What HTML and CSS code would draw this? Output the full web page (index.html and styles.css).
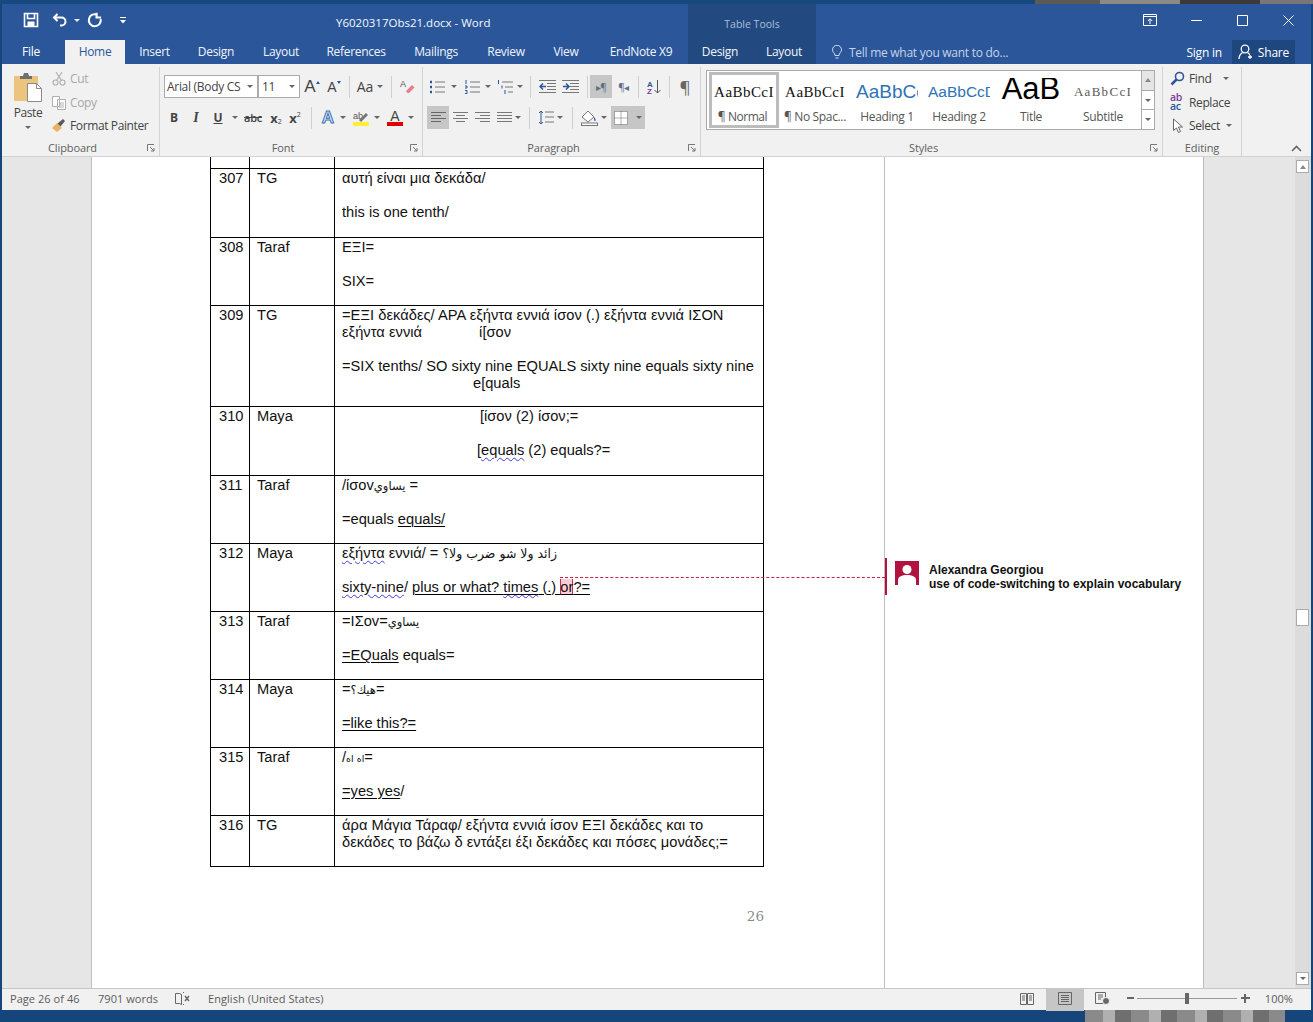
FILE: index.html
```html
<!DOCTYPE html>
<html lang="en">
<head>
<meta charset="utf-8">
<title>Y6020317Obs21.docx - Word</title>
<link rel="stylesheet" href="styles.css">
</head>
<body>
<div class="desk-top"></div>
<div class="window">
  <header class="titlebar">
    <div class="qat">
      <span class="c w34"><svg width="16" height="16" viewBox="0 0 16 16" fill="none" stroke="#fff" stroke-width="1.6"><path d="M1.5 1.5h13v13h-13z"/><path d="M4.5 1.5v5h7v-5"/><path d="M4.5 14.5v-5h7v5" fill="#fff" stroke="none"/></svg></span>
      <span class="c w24"><svg width="16" height="16" viewBox="0 0 16 16" fill="none" stroke="#fff" stroke-width="2"><path d="M5.5 2 2 5.5 5.5 9"/><path d="M2.5 5.5h7a4 4 0 0 1 0 8H8"/></svg></span>
      <span class="c w10"><i class="caret caret-w"></i></span>
      <span class="c w26"><svg width="16" height="16" viewBox="0 0 16 16" fill="none" stroke="#fff" stroke-width="2"><path d="M10.5 2.8A6 6 0 1 0 13.7 7"/><path d="M9.5 0.8v4.8h4.6"/></svg></span>
      <span class="c w30"><svg width="8" height="8" viewBox="0 0 8 8" fill="#fff"><path d="M1 1h6v1H1zM1 4h6L4 7.500z"/></svg></span>
    </div>
    <div class="doc-title">Y6020317Obs21.docx - Word</div>
    <div class="tools-title">Table Tools</div>
    <div class="winctl">
      <span class="c w46"><svg width="14" height="12" viewBox="0 0 14 12" fill="none" stroke="#fff"><path d="M.5.5h13v11H.5zM.5 2.500h13"/><path d="M7 10V5M4.800 7 7 4.800 9.200 7"/></svg></span>
      <span class="c w46"><svg width="11" height="11" viewBox="0 0 11 11" stroke="#fff"><path d="M0 5.500h11"/></svg></span>
      <span class="c w46"><svg width="11" height="11" viewBox="0 0 11 11" fill="none" stroke="#fff"><path d="M.5.500h10v10H.5z"/></svg></span>
      <span class="c w46"><svg width="11" height="11" viewBox="0 0 11 11" stroke="#fff"><path d="M.5.500l10 10M10.500.500l-10 10"/></svg></span>
    </div>
  </header>

  <nav class="tabs">
    <span class="tab t-file">File</span>
    <span class="tab t-home">Home</span>
    <span class="tab t60">Insert</span>
    <span class="tab t64">Design</span>
    <span class="tab t66">Layout</span>
    <span class="tab t84">References</span>
    <span class="tab t76">Mailings</span>
    <span class="tab t64">Review</span>
    <span class="tab t56">View</span>
    <span class="tab t94">EndNote X9</span>
    <span class="tab t64 ctx">Design</span>
    <span class="tab t64 ctx">Layout</span>
    <span class="tell"><svg width="12" height="15" viewBox="0 0 12 15" fill="none" stroke="#cfdcf0"><path d="M4 10.500C4 8 1.500 7.500 1.500 4.800a4.500 4.500 0 0 1 9 0C10.500 7.500 8 8 8 10.500zM4.500 13h3"/></svg>Tell me what you want to do...</span>
    <span class="signin">Sign in</span>
    <span class="share"><svg width="17" height="16" viewBox="0 0 17 16" fill="none" stroke="#fff" stroke-width="1.300"><circle cx="7" cy="5" r="3.800"/><path d="M1 15c0-3.500 2-5.500 3.500-6.500M9.500 8.500c1 .6 1.700 1.300 2.200 2.200M12 11v4M10 13h4"/></svg>Share</span>
  </nav>

  <section class="ribbon">
    <div class="grp g-clip">
      <div class="body clip-body">
        <div class="paste">
          <svg width="30" height="31" viewBox="0 0 30 31"><rect x="1" y="5" width="24" height="25" fill="#edc47e"/><path d="M7 5h3l1-3h4l1 3h3v3H7z" fill="#6f6f6f"/><path d="M14.500 12.500h9l5 5v13h-14z" fill="#fff" stroke="#8a8a8a"/><path d="M23.500 12.500v5h5" fill="none" stroke="#8a8a8a"/></svg>
          <span class="paste-l">Paste</span>
          <i class="caret"></i>
        </div>
        <div class="clip-list">
          <span class="cmd off"><svg width="14" height="15" viewBox="0 0 14 15" fill="none" stroke="#b0b0b0" stroke-width="1.200"><circle cx="3.500" cy="11.500" r="2.500"/><circle cx="10.500" cy="11.500" r="2.500"/><path d="M4.500 9.500 10 1M9.500 9.500 4 1"/></svg>Cut</span>
          <span class="cmd off"><svg width="14" height="15" viewBox="0 0 14 15" fill="#fff" stroke="#b0b0b0"><path d="M.5 1.500h7v10h-7zM5.500 4.500h8v10h-8z"/><path d="M7 8h5M7 10h5M7 12h5" fill="none"/></svg>Copy</span>
          <span class="cmd"><svg width="14" height="15" viewBox="0 0 14 15"><path d="M0 10 5 5l5 5-5 4z" fill="#e8b35c"/><path d="M5.500 5.500 11 1l2 2-4.500 5.500z" fill="#5a5a5a"/></svg>Format Painter</span>
        </div>
      </div>
      <div class="glabel"><span>Clipboard</span><svg class="launch" width="8" height="8" viewBox="0 0 8 8" fill="none" stroke="#777"><path d="M.5 7V.5H7M3 3l4 4M7 4v3H4"/></svg></div>
    </div>

    <div class="grp g-font">
      <div class="body rows">
        <div class="row row-font1">
          <span class="sel sel-font">Arial (Body CS<i class="caret"></i></span>
          <span class="sel sel-size">11<i class="caret"></i></span>
          <span class="c w24 glyph big">A<i class="mini-up"></i></span>
          <span class="c w20 glyph mid">A<i class="mini-dn"></i></span>
          <span class="sep sw10"></span>
          <span class="c w22 glyph aa">Aa</span>
          <span class="c w8"><i class="caret"></i></span>
          <span class="sep sw14"></span>
          <span class="c w18"><svg width="16" height="16" viewBox="0 0 16 16"><path d="M7 12 13 6l2.500 2.500L10 14H8.500z" fill="#e4808e"/><text x="1" y="8" class="tiny">A</text></svg></span>
        </div>
        <div class="row">
          <span class="c w22 fmt b">B</span>
          <span class="c w22 fmt i">I</span>
          <span class="c w22 fmt u">U</span>
          <span class="c w12"><i class="caret"></i></span>
          <span class="c w24 abc">abc</span>
          <span class="c w22 fmt b small">x<sub>2</sub></span>
          <span class="c w16 fmt b small">x<sup>2</sup></span>
          <span class="sep sw16"></span>
          <span class="c w18 glowA">A</span>
          <span class="c w12"><i class="caret"></i></span>
          <span class="c w24"><svg width="18" height="16" viewBox="0 0 18 16"><rect x="1" y="12" width="16" height="4" fill="#ffee33"/><text x="1" y="9" class="tiny">ab</text><path d="M7 10 14 3l2 2-7 7z" fill="#777"/></svg></span>
          <span class="c w8"><i class="caret"></i></span>
          <span class="c colorA">A</span>
          <span class="c w4"><i class="caret"></i></span>
        </div>
      </div>
      <div class="glabel"><span>Font</span><svg class="launch" width="8" height="8" viewBox="0 0 8 8" fill="none" stroke="#777"><path d="M.5 7V.5H7M3 3l4 4M7 4v3H4"/></svg></div>
    </div>

    <div class="grp g-para">
      <div class="body rows">
        <div class="row">
          <span class="c w22"><svg width="16" height="14" viewBox="0 0 16 14" fill="none" stroke="#777"><path d="M6 2h10M6 7h10M6 12h10"/><path d="M1 2h2M1 7h2M1 12h2" stroke="#2b579a" stroke-width="2.500"/></svg></span>
          <span class="c w12"><i class="caret"></i></span>
          <span class="c w24"><svg width="16" height="14" viewBox="0 0 16 14" fill="none" stroke="#777"><path d="M6 2h10M6 7h10M6 12h10"/><path d="M2 0v4M1 6h2v2H1M1 10.500h2v3H1" stroke="#2b579a"/></svg></span>
          <span class="c w8"><i class="caret"></i></span>
          <span class="c w26"><svg width="16" height="14" viewBox="0 0 16 14" fill="none" stroke="#777"><path d="M5 2h11M8 7h8M11 12h5"/><path d="M1.500 0v4M5 5.500v3M8 10v4" stroke="#2b579a"/></svg></span>
          <span class="c w4"><i class="caret"></i></span>
          <span class="sep sw16"></span>
          <span class="c w18"><svg width="17" height="13" viewBox="0 0 17 13" fill="none" stroke="#777"><path d="M0 .5h17M8 3.500h9M8 6.500h9M8 9.500h9M0 12.500h17"/><path d="M7 6.500H1M4 3.500l-3 3 3 3" stroke="#2b579a" stroke-width="1.500"/></svg></span>
          <span class="c w28"><svg width="17" height="13" viewBox="0 0 17 13" fill="none" stroke="#777"><path d="M0 .5h17M8 3.500h9M8 6.500h9M8 9.500h9M0 12.500h17"/><path d="M1 6.500h6M4 3.500l3 3-3 3" stroke="#2b579a" stroke-width="1.500"/></svg></span>
          <span class="sep sw6"></span>
          <span class="c w22 h23 on pil">&#9656;&#182;</span>
          <span class="c w22 pil">&#182;&#9666;</span>
          <span class="sep sw8"></span>
          <span class="c w24"><svg width="16" height="16" viewBox="0 0 16 16" fill="none" stroke="#555"><text x="1" y="7.500" class="az az-a">A</text><text x="1" y="15" class="az az-z">Z</text><path d="M11.500 1v13M8.500 11l3 3 3-3"/></svg></span>
          <span class="sep sw6"></span>
          <span class="c w26 pilcrow">&#182;</span>
        </div>
        <div class="row row-para2">
          <span class="c w22 h23 on"><svg width="15" height="11" viewBox="0 0 15 11" stroke="#666"><path d="M0 .5h15M0 3.500h10M0 6.500h15M0 9.500h10"/></svg></span>
          <span class="c w22"><svg width="15" height="11" viewBox="0 0 15 11" stroke="#777"><path d="M0 .5h15M3 3.500h9M0 6.500h15M3 9.500h9"/></svg></span>
          <span class="c w22"><svg width="15" height="11" viewBox="0 0 15 11" stroke="#777"><path d="M0 .5h15M5 3.500h10M0 6.500h15M5 9.500h10"/></svg></span>
          <span class="c w22"><svg width="15" height="11" viewBox="0 0 15 11" stroke="#777"><path d="M0 .5h15M0 3.500h15M0 6.500h15M0 9.500h15"/></svg></span>
          <span class="c w6"><i class="caret"></i></span>
          <span class="sep sw16"></span>
          <span class="c w18"><svg width="16" height="15" viewBox="0 0 16 15" fill="none" stroke="#777"><path d="M7 2h9M7 7h9M7 12h9"/><path d="M3 1v13M1 3l2-2 2 2M1 12l2 2 2-2" stroke="#2b579a"/></svg></span>
          <span class="c w10"><i class="caret"></i></span>
          <span class="sep sw14"></span>
          <span class="c w22"><svg width="18" height="17" viewBox="0 0 18 17"><path d="M1 8 7 2l6 6-6 5z" fill="#fff" stroke="#777"/><path d="M13 8c2 2 2 4 1 4s-1-2-1-4z" fill="#2b579a"/><rect x=".5" y="14" width="16" height="2.500" fill="#fff" stroke="#777"/></svg></span>
          <span class="c w6"><i class="caret"></i></span>
          <span class="borders on h23"><svg width="14" height="14" viewBox="0 0 14 14" fill="#fff" stroke="#666" stroke-dasharray="1 1"><path d="M.5.5h13v13H.5zM7 .5v13M.5 7h13"/></svg><i class="caret"></i></span>
        </div>
      </div>
      <div class="glabel"><span>Paragraph</span><svg class="launch" width="8" height="8" viewBox="0 0 8 8" fill="none" stroke="#777"><path d="M.5 7V.5H7M3 3l4 4M7 4v3H4"/></svg></div>
    </div>

    <div class="grp g-styles">
      <div class="body gallery-wrap">
        <div class="gallery">
          <div class="sty sty-sel"><span class="pv pv-n">AaBbCcI</span><span class="sl sl-n">&#182; Normal</span></div>
          <div class="sty"><span class="pv pv-n">AaBbCcI</span><span class="sl">&#182; No Spac...</span></div>
          <div class="sty"><span class="pv pv-h1">AaBbCcD</span><span class="sl">Heading 1</span></div>
          <div class="sty"><span class="pv pv-h2">AaBbCcD</span><span class="sl">Heading 2</span></div>
          <div class="sty"><span class="pv pv-t">AaB</span><span class="sl">Title</span></div>
          <div class="sty"><span class="pv pv-s">AaBbCcI</span><span class="sl">Subtitle</span></div>
        </div>
        <div class="gscroll">
          <span class="gs gs-up"><i class="caret up"></i></span>
          <span class="gs"><i class="caret"></i></span>
          <span class="gs gs-more"><i class="caret"></i></span>
        </div>
      </div>
      <div class="glabel"><span>Styles</span><svg class="launch" width="8" height="8" viewBox="0 0 8 8" fill="none" stroke="#777"><path d="M.5 7V.5H7M3 3l4 4M7 4v3H4"/></svg></div>
    </div>

    <div class="grp g-edit">
      <div class="body clip-list edit-list">
        <span class="cmd"><svg width="15" height="15" viewBox="0 0 15 15" fill="none"><circle cx="9.500" cy="5.500" r="4" stroke="#2b579a" stroke-width="1.600"/><path d="M6.500 8.500 1.500 13.500" stroke="#2b579a" stroke-width="2.500"/></svg>Find<i class="caret cm"></i></span>
        <span class="cmd"><span class="abac"><b class="ab">ab</b><b class="ac">ac</b></span>Replace</span>
        <span class="cmd"><svg width="15" height="16" viewBox="0 0 15 16" fill="#fff" stroke="#666"><path d="M3.500 1v11.500l3-2.500 2 4.500 2-1-2-4.500h4z"/></svg>Select<i class="caret cs"></i></span>
      </div>
      <div class="glabel"><span>Editing</span></div>
    </div>

    <div class="collapse"><svg width="11" height="7" viewBox="0 0 11 7" fill="none" stroke="#666" stroke-width="1.600"><path d="M1 6l4.500-4.500L10 6"/></svg></div>
  </section>

  <main class="doc">
    <div class="gutter"></div>
    <div class="page">
      <table class="tr">
        <colgroup><col class="c1"><col class="c2"><col class="c3"></colgroup>
        <tr class="r0"><td></td><td></td><td></td></tr>
        <tr class="r69"><td>307</td><td>TG</td><td><p class="gr">αυτή είναι μια δεκάδα/</p><p>&nbsp;</p><p>this is one tenth/</p></td></tr>
        <tr class="r68"><td>308</td><td>Taraf</td><td><p class="gr">ΕΞΙ=</p><p>&nbsp;</p><p>SIX=</p></td></tr>
        <tr class="r101"><td>309</td><td>TG</td><td><p class="gr">=ΕΞΙ δεκάδες/ ΑΡΑ εξήντα εννιά ίσον (.) εξήντα εννιά ΙΣΟΝ</p><p class="gr">εξήντα εννιά<span class="gap57"></span>ί[σον</p><p>&nbsp;</p><p>=SIX tenths/ SO sixty nine EQUALS sixty nine equals sixty nine</p><p class="in131">e[quals</p></td></tr>
        <tr class="r69"><td>310</td><td>Maya</td><td><p class="in138">[ίσον (2) ίσον;=</p><p>&nbsp;</p><p class="in135">[<span class="wavy">equals</span> (2) equals?=</p></td></tr>
        <tr class="r68"><td>311</td><td>Taraf</td><td><p>/ίσοv<bdi class="ar" dir="rtl">يساوي</bdi> =</p><p>&nbsp;</p><p>=equals <u>equals/</u></p></td></tr>
        <tr class="r68"><td>312</td><td>Maya</td><td><p><span class="wavy">εξήντα</span> εννιά/ = <bdi class="ar ar-w" dir="rtl">زائد ولا شو ضرب ولا؟</bdi></p><p>&nbsp;</p><p><span class="wavy">sixty-nine</span>/ <u>plus or what? <span class="wavy">times</span> (.) <span class="hl">or</span>?=</u></p></td></tr>
        <tr class="r68"><td>313</td><td>Taraf</td><td><p>=IΣov=<bdi class="ar" dir="rtl">يساوي</bdi></p><p>&nbsp;</p><p><u>=EQuals</u> equals=</p></td></tr>
        <tr class="r68"><td>314</td><td>Maya</td><td><p>=<bdi class="ar" dir="rtl">هيك؟</bdi>=</p><p>&nbsp;</p><p><u>=like this?=</u></p></td></tr>
        <tr class="r68"><td>315</td><td>Taraf</td><td><p>/<bdi class="ar ar-n" dir="rtl">اه اه</bdi>=</p><p>&nbsp;</p><p><u>=yes yes</u>/</p></td></tr>
        <tr class="r51"><td>316</td><td>TG</td><td><p class="gr">άρα Μάγια Τάραφ/ εξήντα εννιά ίσον ΕΞΙ δεκάδες και το</p><p class="gr">δεκάδες το βάζω δ εντάξει έξι δεκάδες και πόσες μονάδες;=</p></td></tr>
      </table>
      <div class="pageno">26</div>
    </div>
    <aside class="markup">
      <div class="balloon">
        <svg class="avatar" width="24" height="24" viewBox="0 0 24 24"><rect width="24" height="24" fill="#b3123f"/><circle cx="12" cy="8.500" r="4.500" fill="#fff"/><path d="M3 24v-5c0-3.500 4-5 9-5s9 1.500 9 5v5z" fill="#fff"/></svg>
        <div class="ctext"><div>Alexandra Georgiou</div><div>use of code-switching to explain vocabulary</div></div>
      </div>
    </aside>
    <div class="gutter-r"></div>
    <div class="vscroll">
      <span class="vbtn"><i class="caret up"></i></span>
      <span class="thumb"></span>
      <span class="vbtn"><i class="caret"></i></span>
    </div>
    <div class="connector"></div>
  </main>

  <footer class="status">
    <span class="st st-page">Page 26 of 46</span>
    <span class="st st-words">7901 words</span>
    <span class="st st-book"><svg width="15" height="13" viewBox="0 0 15 13" fill="none" stroke="#666"><path d="M.5 1.500h4l2 1v10l-2-1h-4z"/><path d="M6.500 2.500v10M9 .5H8M9 12.500H8"/><path d="M10 4l4 5M14 4l-4 5" stroke-width="1.400"/></svg></span>
    <span class="st st-lang">English (United States)</span>
    <span class="st-right">
      <span class="c w38 h22"><svg width="14" height="13" viewBox="0 0 14 13" fill="none" stroke="#666"><path d="M.5 1.500h6v11h-6zM7.500 1.500h6v11h-6zM2 4h3M2 6h3M2 8h3M9 4h3M9 6h3M9 8h3"/></svg></span>
      <span class="c w38 h22 on-st"><svg width="14" height="13" viewBox="0 0 14 13" fill="none" stroke="#666"><path d="M.5.5h13v12H.5zM3 3.500h8M3 5.500h8M3 7.500h8M3 9.500h8"/></svg></span>
      <span class="c w38 h22"><svg width="15" height="13" viewBox="0 0 15 13" fill="none" stroke="#666"><path d="M.5.5h10v11H.5zM3 3h5M3 5h5M3 7h3"/><circle cx="11" cy="9" r="3.500" fill="#666" stroke="#f1f1f1"/></svg></span>
      <span class="zoom-m"></span>
      <span class="slider"><i class="knob"></i></span>
      <span class="zoom-p"></span>
      <span class="st st-pct">100%</span>
    </span>
  </footer>
</div>
<div class="desk-bottom"><div class="photo"></div></div>
</body>
</html>
```
FILE: styles.css
```css
* { box-sizing: border-box; }
html, body { margin: 0; padding: 0; }
body { width: 1313px; height: 1022px; overflow: hidden; background: #15457a; font-family: "Open Sans", "Noto Sans", sans-serif; font-size: 12px; color: #444; }
i { font-style: normal; }
p { margin: 0; }

.desk-top { height: 4px; background: linear-gradient(90deg, #164a7e 0 1035px, #5c5a56 1035px 1100px, #8d8a85 1100px 1180px, #3c3a38 1180px 1260px, #777 1260px); }
.window { width: 1309px; margin: 0 2px; height: 1006px; display: flex; flex-direction: column; position: relative; }
.desk-bottom { height: 12px; padding-left: 1085px; }
.photo { width: 200px; height: 12px; background: repeating-linear-gradient(90deg, #8a8a8a 0 18px, #b0b0b0 18px 30px, #6f6f6f 30px 46px); }

.c { display: flex; align-items: center; justify-content: center; flex: none; height: 22px; }
.w4 { width: 4px; } .w6 { width: 6px; } .w8 { width: 8px; } .w10 { width: 10px; } .w12 { width: 12px; } .w16 { width: 16px; } .w18 { width: 18px; } .w20 { width: 20px; } .w22 { width: 22px; } .w24 { width: 24px; } .w26 { width: 26px; } .w28 { width: 28px; } .w30 { width: 30px; } .w34 { width: 34px; } .w38 { width: 38px; } .w46 { width: 46px; }
.h22 { height: 22px; } .h23 { height: 23px; }
.caret { display: block; width: 0; height: 0; border: 3px solid transparent; border-top: 3px solid #666; border-bottom: 0; }
.caret.up { border-top: 0; border-bottom: 4px solid #888; }
.caret-w { border-top-color: #e8eef8; }

.titlebar { height: 36px; background: #2b579a; display: flex; align-items: center; color: #fff; }
.qat { display: flex; align-items: center; width: 334px; padding: 0 0 4px 12px; }
.doc-title { width: 352px; font-size: 11.500px; color: #f4f7fb; }
.tools-title { width: 128px; align-self: stretch; background: #234a80; color: #a9bedb; font-size: 10.500px; text-align: center; line-height: 40px; }
.winctl { margin-left: auto; display: flex; align-items: center; padding-bottom: 4px; }

.tabs { height: 24px; background: #2b579a; display: flex; align-items: center; color: #f0f4fa; font-size: 12px; }
.tab { flex: none; height: 24px; line-height: 24px; text-align: center; letter-spacing: -.3px; }
.t-file { width: 58px; margin-right: 5px; color: #fff; }
.t-home { width: 60px; background: #f1f1f1; color: #2b579a; }
.t60 { width: 59px; } .t64 { width: 64px; } .t66 { width: 66px; } .t84 { width: 84px; } .t76 { width: 76px; } .t56 { width: 56px; } .t94 { width: 94px; }
.ctx { background: #234a80; }
.tell { margin-left: 15px; display: flex; align-items: center; gap: 6px; color: #c4d3ea; letter-spacing: -.27px; }
.signin { margin-left: auto; margin-right: 10px; color: #fff; letter-spacing: -.2px; }
.share { width: 63px; height: 24px; margin-right: 16px; background: #1f477f; color: #fff; display: flex; align-items: center; justify-content: center; gap: 3px; letter-spacing: -.2px; }

.ribbon { height: 93px; background: #f1f1f1; border-bottom: 1px solid #d2d2d2; display: flex; color: #444; }
.grp { flex: none; height: 89px; margin-top: 3px; display: flex; flex-direction: column; border-right: 1px solid #d4d4d4; }
.g-clip { width: 158px; } .g-font { width: 263px; } .g-para { width: 278px; } .g-styles { width: 462px; } .g-edit { width: 79px; }
.body { flex: 1; min-height: 0; }
.glabel { height: 17px; flex: none; display: flex; align-items: center; color: #5f5f5f; font-size: 11px; letter-spacing: -.1px; }
.glabel > span { flex: 1; text-align: center; }
.launch { width: 16px; padding: 0 4px; flex: none; }

.clip-body { display: flex; }
.paste { width: 50px; display: flex; flex-direction: column; align-items: center; padding: 2px 0 0 2px; }
.paste svg { margin-top: 2px; }
.paste-l { font-size: 12px; line-height: 16px; margin-top: 3px; letter-spacing: -.4px; }
.paste .caret { margin-top: 5px; }
.clip-list { display: flex; flex-direction: column; }
.cmd { height: 23.500px; flex: none; display: flex; align-items: center; gap: 4px; white-space: nowrap; letter-spacing: -.38px; font-size: 12px; }
.off { color: #a8a8a8; }
.edit-list { padding-left: 7px; }
.cm { margin-left: 8px; }
.cs { margin-left: 2px; }
.abac { display: flex; flex-direction: column; width: 15px; line-height: 9px; font-size: 10.500px; font-weight: 600; }
.abac .ab { color: #7b3f98; font-weight: 600; }
.abac .ac { color: #2b579a; font-weight: 600; }

.rows { padding: 8px 0 0 3px; display: flex; flex-direction: column; gap: 8px; }
.row { display: flex; align-items: center; height: 23px; }
.row-font1 { padding-left: 1px; }
.row-para2 { padding-left: 1px; }
.sel { height: 23px; border: 1px solid #ababab; background: #fff; display: flex; align-items: center; justify-content: space-between; padding: 0 4px 0 2px; color: #444; flex: none; letter-spacing: -.3px; white-space: nowrap; overflow: hidden; }
.sel-font { width: 94px; }
.sel-size { width: 42px; padding-left: 3px; }
.sep { display: block; flex: none; height: 22px; }
.sep::after { content: ""; display: block; width: 1px; height: 22px; margin: 0 auto; background: #cfcfcf; }
.sw6 { width: 6px; } .sw8 { width: 8px; } .sw10 { width: 10px; } .sw14 { width: 14px; } .sw16 { width: 16px; }
.glyph { font-family: "Liberation Sans", sans-serif; color: #444; }
.big { font-size: 17px; }
.mid { font-size: 14px; }
.aa { font-size: 14px; font-family: "Open Sans", sans-serif; }
.mini-up, .mini-dn { display: block; width: 0; height: 0; border: 2.500px solid transparent; margin-bottom: 8px; }
.mini-up { border-bottom: 3px solid #2b579a; border-top: 0; }
.mini-dn { border-top: 3px solid #2b579a; border-bottom: 0; }
.tiny { font: 9px "Liberation Sans", sans-serif; fill: #555; }
.fmt { font-family: "Open Sans", sans-serif; font-size: 12px; color: #444; }
.b { font-weight: 700; }
.i { font-style: italic; font-family: "Liberation Serif", serif; font-size: 14px; font-weight: 700; }
.u { font-weight: 700; text-decoration: underline; }
.fmt sub, .fmt sup { font-size: 7px; font-weight: 400; line-height: 8px; vertical-align: baseline; }
.fmt sub { align-self: flex-end; margin-bottom: 3px; }
.fmt sup { align-self: flex-start; margin-top: 4px; }
.small { font-size: 13px; }
.abc { font-size: 11px; text-decoration: line-through; font-weight: 600; letter-spacing: -.3px; }
.glowA { font: 700 17px "Liberation Sans", sans-serif; color: #dfe9f6; -webkit-text-stroke: 1px #3c73b8; }
.colorA { font: 14px "Liberation Sans", sans-serif; color: #444; border-bottom: 4px solid #e00000; height: 16px; width: 16px; margin: 0 6px; line-height: 12px; }
.pil { font-size: 10px; color: #5d6f86; letter-spacing: -1px; }
.az { font: 700 8px "Liberation Sans", sans-serif; stroke: none; }
.az-a { fill: #2b579a; } .az-z { fill: #7b3f98; }
.pilcrow { font-size: 17px; color: #666; }
.on { background: #c6c6c6; }
.borders { display: flex; align-items: center; gap: 8px; width: 34px; flex: none; padding-left: 3px; margin-left: 4px; }

.gallery-wrap { display: flex; padding: 3px 0 0 5px; }
.gallery { width: 435px; height: 60px; background: #fff; border: 1px solid #ababab; border-right: 0; display: flex; padding: 1px 0 0 2px; }
.sty { width: 72px; height: 56px; display: flex; flex-direction: column; align-items: center; overflow: hidden; flex: none; }
.sty-sel { width: 70px; border: 3px solid #bcbcbc; }
.pv { display: block; width: 62px; height: 37px; overflow: hidden; white-space: nowrap; text-align: center; color: #111; }
.sl { font-size: 12px; line-height: 15px; color: #555; letter-spacing: -.35px; white-space: nowrap; }
.sl-n { margin-right: 3px; letter-spacing: -.45px; }
.pv-n { font: 15px/40px "Liberation Serif", serif; letter-spacing: .45px; }
.sty-sel .pv-n { height: 34px; line-height: 34px; }
.pv-h1 { font: 19px/40px "Liberation Sans", sans-serif; color: #2e74b5; text-align: left; }
.pv-h2 { font: 15.500px/40px "Liberation Sans", sans-serif; color: #2e74b5; text-align: left; }
.pv-t { font: 31px/21px "Liberation Sans", sans-serif; color: #000; height: 31px; margin-top: 6px; }
.pv-s { font: 13px/40px "Liberation Serif", serif; color: #5a5a5a; letter-spacing: 1.300px; }
.gscroll { width: 14px; height: 60px; display: flex; flex-direction: column; border: 1px solid #ababab; background: #f8f8f8; }
.gs { flex: 1; display: flex; align-items: center; justify-content: center; background: #fff; border-bottom: 1px solid #ababab; }
.gs-up { background: #e5e5e5; }
.gs-more { border-bottom: 0; }
.collapse { flex: 1; display: flex; align-items: flex-end; justify-content: center; padding: 0 0 4px 39px; }

.doc { flex: none; height: 831px; display: flex; position: relative; overflow: hidden; }
.gutter { width: 90px; background: #e6e6e6; border-right: 1px solid #c0c0c0; flex: none; }
.page { width: 793px; background: #fff; border-right: 1px solid #bdbdbd; flex: none; padding-left: 118px; font: 14.670px/17px "Liberation Sans", sans-serif; color: #111; }
.tr { border-collapse: collapse; table-layout: fixed; width: 553px; }
.c1 { width: 39px; } .c2 { width: 85px; } .c3 { width: 429px; }
.tr td { border: 1px solid #000; padding: 1px 0 0 8px; vertical-align: top; }
.tr td:nth-child(2) { padding-left: 7px; }
.tr td:nth-child(3) { padding-left: 7px; }
.r0 td { border-top: 0; height: 11px; padding: 0; }
.r69 td { height: 69px; }
.r68 td { height: 68px; }
.r101 td { height: 101px; }
.r51 td { height: 51px; }
.gr { letter-spacing: .04px; }
.tr u { text-decoration: underline #000 1px; text-underline-offset: 2px; }
.wavy { text-decoration: underline wavy #3a3ad6 1px; text-underline-offset: 2px; }
.hl { background: #f9cdd3; box-shadow: inset 1px 0 #c0304f, inset -1px 0 #c0304f; }
.ar { font: 11.500px/1 "DejaVu Sans", sans-serif; }
.ar-w { font-size: 12.500px; }
.ar-n { font-size: 9.500px; }
.gap57 { display: inline-block; width: 57px; }
.in131 { padding-left: 131px; }
.in138 { padding-left: 138px; }
.in135 { padding-left: 135px; }
.pageno { width: 554px; margin-top: 40px; text-align: right; font: 13.500px/18px "DejaVu Serif", serif; color: #8a8a8a; }

.markup { width: 319px; background: #fff; border-right: 1px solid #bdbdbd; flex: none; padding-top: 401px; }
.balloon { height: 37px; border-left: 2px solid #b3123f; padding: 3px 0 0 8px; display: flex; gap: 10px; }
.avatar { flex: none; }
.ctext { font: 700 12px/14px "Liberation Sans", sans-serif; color: #111; padding-top: 2px; white-space: nowrap; }
.gutter-r { width: 91px; background: #e6e6e6; flex: none; }
.vscroll { width: 16px; background: #dcdcdc; flex: none; display: flex; flex-direction: column; align-items: flex-start; padding: 3px 0 3px 1px; }
.vbtn { width: 13px; height: 13px; background: #fff; border: 1px solid #ababab; display: flex; align-items: center; justify-content: center; flex: none; }
.thumb { width: 13px; height: 17px; background: #fff; border: 1px solid #ababab; margin: 436px 0 346px; flex: none; }
.connector { position: absolute; left: 558px; top: 420px; width: 325px; height: 0; border-top: 1px dashed #c8203f; }

.status { height: 22px; flex: none; background: #f1f1f1; border-top: 1px solid #c6c6c6; display: flex; align-items: center; color: #5c5c5c; font-size: 11px; }
.st { white-space: nowrap; margin-bottom: 3px; letter-spacing: .05px; }
.st-page { width: 96px; padding-left: 8px; }
.st-words { width: 77px; }
.st-book { width: 33px; display: flex; }
.st-right { margin-left: auto; display: flex; align-items: center; padding-right: 18px; }
.st-right .c { padding-bottom: 3px; }
.on-st { background: #c6c6c6; }
.zoom-m { width: 7px; height: 2px; background: #666; margin: 0 3px 3px 5px; }
.slider { width: 100px; height: 1px; background: #999; position: relative; display: block; margin-bottom: 3px; }
.knob { position: absolute; left: 48px; top: -5px; width: 4px; height: 11px; background: #666; }
.zoom-p { width: 9px; height: 9px; margin: 0 15px 3px 4px; background: linear-gradient(#666,#666) center / 9px 2px no-repeat, linear-gradient(#666,#666) center / 2px 9px no-repeat; }
```
